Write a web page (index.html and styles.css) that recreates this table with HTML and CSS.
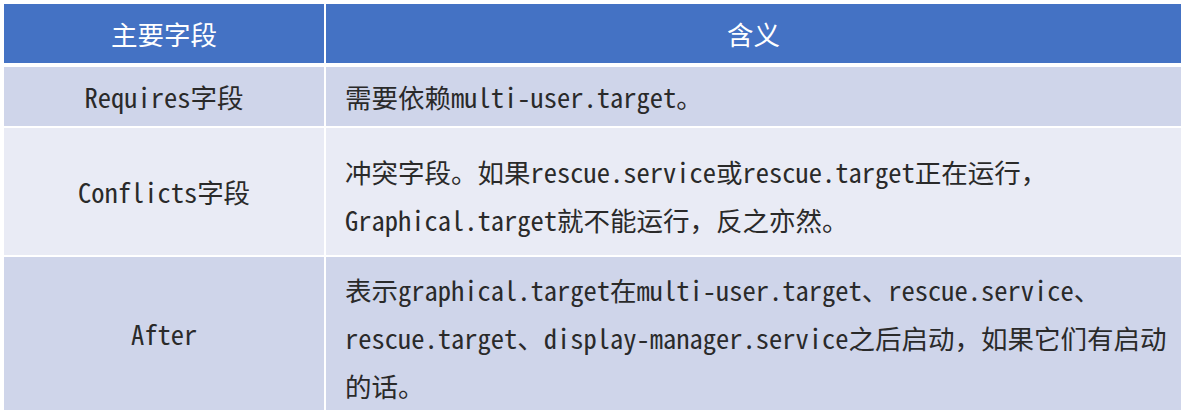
FILE: index.html
```html
<!DOCTYPE html>
<html lang="zh-CN">
<head>
  <meta charset="UTF-8" />
  <title>字段说明</title>
  <link rel="stylesheet" href="styles.css">
</head>
<body>
  <table class="field-table">
    <thead>
      <tr class="head-row">
        <th class="col-name">主要字段</th>
        <th class="col-desc">含义</th>
      </tr>
    </thead>
    <tbody>
      <tr class="row-one dark">
        <td class="col-name">Requires字段</td>
        <td class="col-desc">需要依赖multi-user.target。</td>
      </tr>
      <tr class="row-two light">
        <td class="col-name">Conflicts字段</td>
        <td class="col-desc">冲突字段。如果rescue.service或rescue.target正在运行，<br>Graphical.target就不能运行，反之亦然。</td>
      </tr>
      <tr class="row-three dark">
        <td class="col-name">After</td>
        <td class="col-desc">表示graphical.target在multi-user.target、rescue.service、<br>rescue.target、display-manager.service之后启动，如果它们有启动<br>的话。</td>
      </tr>
    </tbody>
  </table>
</body>
</html>
```

FILE: styles.css
```css
:root {
  --head-blue: #4472c4;
  --row-dark: #cfd5ea;
  --row-light: #e9ebf5;
  --text-color: #2a2a2a;
}

* {
  box-sizing: border-box;
}

body {
  margin: 0;
  padding: 2px;
  background: #ffffff;
  font-family: "Noto Sans Mono CJK SC", "Liberation Mono", "Noto Sans CJK SC", monospace;
  color: var(--text-color);
}

.field-table {
  border-collapse: separate;
  border-spacing: 2px;
  width: 1181px;
  font-size: 26.5px;
}

.field-table th,
.field-table td {
  padding: 0;
  font-weight: normal;
}

.col-name {
  width: 320px;
  text-align: center;
}

.col-desc {
  text-align: left;
  padding-left: 19px !important;
  line-height: 48px;
}

.head-row th {
  height: 61px;
  background-color: var(--head-blue);
  color: #ffffff;
  text-align: center;
  border-bottom: 2px solid #ffffff;
  padding-left: 0 !important;
}

.dark td {
  background-color: var(--row-dark);
}

.light td {
  background-color: var(--row-light);
}

.row-one td {
  height: 59px;
}

.row-two td {
  height: 127px;
}

.row-three td {
  height: 153px;
}

.row-two .col-desc,
.row-three .col-desc {
  padding-top: 8px;
}
```
